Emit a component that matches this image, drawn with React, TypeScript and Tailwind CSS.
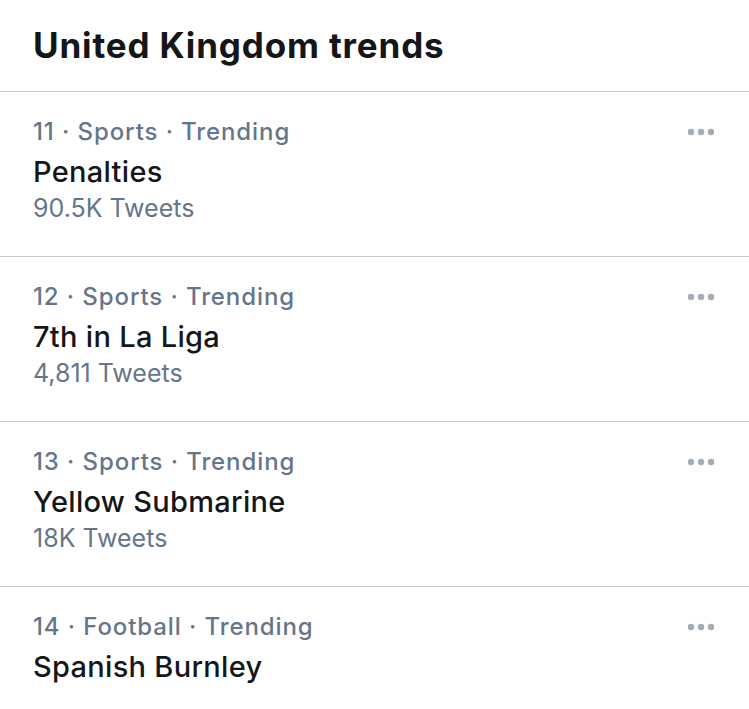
import React from 'react';

type Trend = {
  rank: number;
  category: string;
  name: string;
  tweets?: string;
};

const trends: Trend[] = [
  { rank: 11, category: 'Sports', name: 'Penalties', tweets: '90.5K Tweets' },
  { rank: 12, category: 'Sports', name: '7th in La Liga', tweets: '4,811 Tweets' },
  { rank: 13, category: 'Sports', name: 'Yellow Submarine', tweets: '18K Tweets' },
  { rank: 14, category: 'Football', name: 'Spanish Burnley' },
];

function MoreDots() {
  return (
    <svg width="28" height="8" viewBox="0 0 28 8" className="text-[#a4acb5]">
      <circle cx="4" cy="4" r="3.2" fill="currentColor" />
      <circle cx="14" cy="4" r="3.2" fill="currentColor" />
      <circle cx="24" cy="4" r="3.2" fill="currentColor" />
    </svg>
  );
}

export default function App() {
  return (
    <div
      className="w-[749px] h-[709px] overflow-hidden bg-white"
      style={{ fontFamily: 'Inter, "Noto Sans", sans-serif' }}
    >
      <div className="px-[33px] pt-[23px] pb-[24px] border-b border-[#c9c9cc]">
        <h1 className="text-[35px] leading-[44px] font-bold text-[#141619] tracking-[0.85px]">
          United Kingdom trends
        </h1>
      </div>

      {trends.map((t) => (
        <div key={t.rank} className="border-b border-[#c9c9cc] pl-[33px] pr-[34px] pt-[24px] pb-[34px]">
          <div className="flex items-start justify-between">
            <p className="text-[24px] leading-[32px] font-medium text-[#66768a] tracking-[0.9px]">
              {t.rank} · {t.category} · Trending
            </p>
            <div className="pt-[12px]">
              <MoreDots />
            </div>
          </div>
          <p className="mt-[6px] text-[29px] leading-[36px] font-medium text-[#14171a] tracking-[0.3px]">
            {t.name}
          </p>
          {t.tweets && (
            <p className="mt-[4px] text-[25px] leading-[28px] text-[#66768a]">{t.tweets}</p>
          )}
        </div>
      ))}
    </div>
  );
}
